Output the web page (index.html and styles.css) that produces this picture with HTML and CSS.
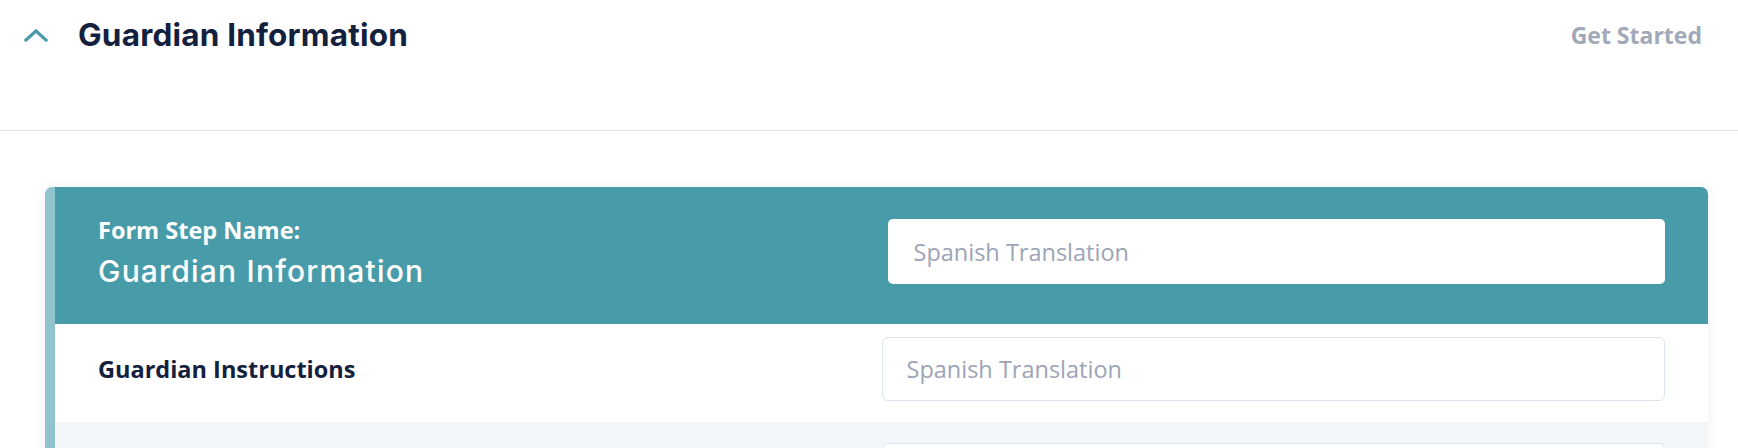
FILE: index.html
```html
<!DOCTYPE html>
<html>
<head>
	<title>Guardian Information</title>
	<meta charset="UTF-8">
	<link rel="stylesheet" href="styles.css">
</head>
<body>
	<div class="topbar">
		<div class="topbar_left">
			<svg class="chevron" width="24" height="14" viewBox="0 0 24 14">
				<path d="M2 12 L12 3 L22 12" fill="none" stroke="#4a9ba8" stroke-width="3.2" stroke-linecap="square"/>
			</svg>
			<span class="topbar_title">Guardian Information</span>
		</div>
		<span class="get_started">Get Started</span>
	</div>
	<div class="page">
		<div class="card">
			<div class="card_head">
				<div class="head_text">
					<div class="head_label">Form Step Name:</div>
					<div class="head_name">Guardian Information</div>
				</div>
				<div class="head_field">
					<input type="text" class="head_input" placeholder="Spanish Translation">
				</div>
			</div>
			<div class="row row_first">
				<div class="row_label">Guardian Instructions</div>
				<input type="text" class="row_input" placeholder="Spanish Translation">
			</div>
			<div class="row row_alt">
				<div class="row_label"></div>
				<input type="text" class="row_input" placeholder="Spanish Translation">
			</div>
		</div>
	</div>
</body>
</html>
```

FILE: styles.css
```css
*{
	margin: 0px;
	padding: 0px;
	box-sizing: border-box;
}
body{
	background-color: #ffffff;
	font-family: "Open Sans", "Liberation Sans", sans-serif;
	overflow: hidden;
}
.topbar{
	height: 131px;
	display: flex;
	justify-content: space-between;
	align-items: flex-start;
	padding: 15px 36px 0px 24px;
	border-bottom: 1px solid #e3e4e6;
}
.topbar_left{
	display: flex;
	align-items: center;
}
.chevron{
	display: block;
	margin-right: 30px;
}
.topbar_title{
	font-family: Inter, "Open Sans", sans-serif;
	font-weight: 700;
	font-size: 31.5px;
	line-height: 40px;
	letter-spacing: 0.2px;
	color: #13213f;
}
.get_started{
	font-weight: 700;
	font-size: 23px;
	line-height: 40px;
	color: #a1a9b8;
}
.page{
	padding: 56px 30px 0px 45px;
}
.card{
	border-left: 10px solid #8fc3cd;
	border-radius: 7px 7px 0px 0px;
	box-shadow: 0px 0px 14px rgba(20, 30, 60, 0.06);
	background-color: #ffffff;
	overflow: hidden;
}
.card_head{
	height: 137px;
	background-color: #489ca9;
	display: grid;
	grid-template-columns: 1fr 1fr;
	align-items: start;
	padding: 29px 43px 0px 43px;
}
.head_text{
	color: #ffffff;
}
.head_label{
	font-weight: 700;
	font-size: 23.5px;
	line-height: 28px;
}
.head_name{
	font-family: Inter, "Open Sans", sans-serif;
	font-weight: 500;
	font-size: 30px;
	line-height: 30px;
	letter-spacing: 1.2px;
	margin-top: 12px;
}
.head_field{
	padding-left: 6px;
	padding-top: 3px;
}
.head_input{
	width: 100%;
	height: 65px;
	border: none;
	border-radius: 5px;
	background-color: #ffffff;
	padding: 0px 26px;
	font-family: "Open Sans", "Liberation Sans", sans-serif;
	font-size: 23.5px;
	outline: none;
}
.row{
	display: grid;
	grid-template-columns: 1fr 1fr;
	align-items: center;
	padding: 21px 43px;
}
.row_first{
	padding-top: 13px;
}
.row_alt{
	background-color: #f3f6f9;
}
.row_label{
	font-weight: 700;
	font-size: 23.5px;
	color: #13213f;
}
.row_input{
	width: 100%;
	height: 64px;
	border: 1px solid #dbe4f1;
	border-radius: 6px;
	background-color: #ffffff;
	padding: 0px 24px;
	font-family: "Open Sans", "Liberation Sans", sans-serif;
	font-size: 23.5px;
	outline: none;
}
.head_input::placeholder,
.row_input::placeholder{
	color: #9ca4b6;
}
```
